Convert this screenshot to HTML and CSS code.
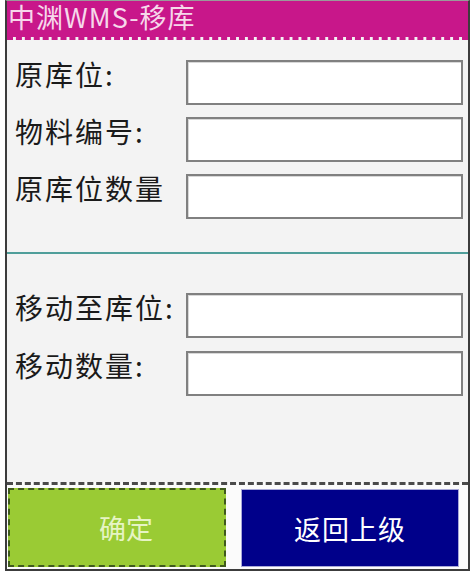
FILE: index.html
```html
<!DOCTYPE html>
<html lang="zh-CN">
<head>
    <meta charset="UTF-8">
    <meta name="viewport" content="width=device-width, initial-scale=1.0">
    <title>中渊WMS-移库</title>
    <link rel="stylesheet" href="styles.css">
</head>
<body>
    <div class="frame">
        <div class="title-bar">中渊WMS-移库</div>

        <div class="content">
            <div class="group group-from">
                <label for="src_loc">原库位:</label>
                <input type="text" id="src_loc">
                <label for="item_no">物料编号:</label>
                <input type="text" id="item_no">
                <label for="src_qty">原库位数量</label>
                <input type="text" id="src_qty">
            </div>

            <div class="divider"></div>

            <div class="group group-to">
                <label for="dest_loc">移动至库位:</label>
                <input type="text" id="dest_loc">
                <label for="move_qty">移动数量:</label>
                <input type="text" id="move_qty">
            </div>
        </div>

        <div class="footer">
            <button class="btn btn-ok">确定</button>
            <button class="btn btn-back">返回上级</button>
        </div>
    </div>
</body>
</html>
```

FILE: styles.css
```css
body {
    margin: 0;
    padding: 0;
    background-color: #fff;
    font-family: "Noto Sans CJK SC", "Noto Sans", sans-serif;
}
.frame {
    box-sizing: border-box;
    width: 465px;
    height: 571px;
    margin-left: 5px;
    border: 2px solid #3c3c3c;
    border-top: 1px solid #9a9a9a;
    display: flex;
    flex-direction: column;
    background-color: #f3f3f3;
}
.title-bar {
    height: 36px;
    padding-left: 1px;
    background-color: #c8178a;
    background-clip: padding-box;
    border-bottom: 3px dashed #c8178a;
    color: #f6d8ea;
    font-size: 27px;
    line-height: 31px;
    letter-spacing: 1px;
    white-space: nowrap;
}
.content {
    flex: 1;
    display: flex;
    flex-direction: column;
}
.group {
    display: grid;
    grid-template-columns: 1fr 277px;
    row-gap: 12px;
    padding: 0 5px 0 8px;
}
.group-from {
    padding-top: 20px;
}
.group-to {
    padding-top: 39px;
    row-gap: 13px;
}
.group label {
    align-self: start;
    font-size: 28px;
    line-height: 29px;
    letter-spacing: 2px;
    color: #1a1a1a;
    white-space: nowrap;
}
.group input {
    box-sizing: border-box;
    height: 45px;
    margin: 0;
    border: 2px solid #808080;
    box-shadow: inset 1px 1px 0 #d8d8d8;
    background-color: #fff;
    font-size: 22px;
    padding: 0 6px;
}
.divider {
    height: 2px;
    margin-top: 33px;
    background-color: #4f9e9a;
}
.footer {
    box-sizing: border-box;
    height: 87px;
    border-top: 3px dashed #4a4a4a;
    background-color: #fbfbfb;
    display: flex;
    align-items: flex-start;
    padding: 3px 0 0 1px;
    gap: 15px;
}
.btn {
    box-sizing: border-box;
    height: 79px;
    margin: 0;
    font-family: "Noto Sans CJK SC", "Noto Sans", sans-serif;
    font-size: 27px;
    cursor: pointer;
}
.btn-ok {
    width: 218px;
    border: 2px dashed #3f5a1c;
    background-color: #9acb34;
    color: #e6f4c4;
    padding-left: 24px;
}
.btn-back {
    width: 218px;
    margin-top: 1px;
    height: 78px;
    border: 1px solid #a8a8d8;
    background-color: #00008a;
    color: #fff;
    letter-spacing: 1px;
}
```
